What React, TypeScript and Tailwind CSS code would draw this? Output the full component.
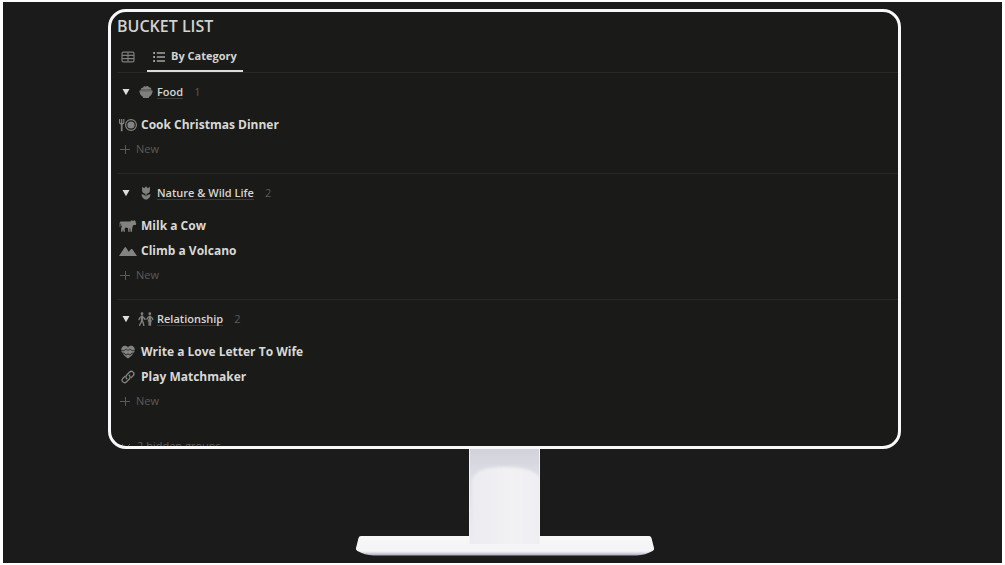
import { useState, type ReactNode } from 'react';

type Item = { title: string; icon: ReactNode };
type Group = { name: string; icon: ReactNode; items: Item[] };

const TableIcon = () => (
  <svg className="w-[14px] h-[14px]" viewBox="0 0 14 14" fill="none" stroke="currentColor" strokeWidth="1.2" aria-hidden="true">
    <rect x="1" y="2.2" width="12" height="9.6" rx="1.4" />
    <path d="M1 5.4h12M1 8.6h12M7 2.2v9.6" />
  </svg>
);

const ListIcon = () => (
  <svg className="w-[12px] h-[12px]" viewBox="0 0 12 12" fill="none" stroke="currentColor" strokeWidth="1.3" aria-hidden="true">
    <path d="M3.8 2H12M3.8 6H12M3.8 10H12" />
    <path d="M0.2 2h1.8M0.2 6h1.8M0.2 10h1.8" strokeWidth="1.8" />
  </svg>
);

const BowlIcon = () => (
  <svg className="w-[14px] h-[14px]" viewBox="0 0 14 14" fill="currentColor" aria-hidden="true">
    <path d="M1.8 4.8C1.5 3.2 2.8 2.4 4 2.7 4.600 1.200 6 1 6.800 1.700 7.600.5 9.600.8 9.800 2.200c1.700-.2 2.800 1 2.500 2.600z" />
    <path d="M0.900 5.200h12.200l.7 1.300H.2z" />
    <path d="M0.500 6.300h13c-.1 2.500-1.400 4.300-3.300 5.400L9.800 13H4.200l-.4-1.300C1.900 10.600.6 8.800.5 6.300z" />
  </svg>
);

const TulipIcon = () => (
  <svg className="w-[14px] h-[14px]" viewBox="0 0 14 14" fill="currentColor" aria-hidden="true">
    <path d="M3.100.8 5.200 2.200 7 .3l1.800 1.900L10.900.8v3.700C10.900 6.500 9.500 7.600 7.600 7.800v2.600c.7-1.500 2-2.300 3.900-2.200-.1 3-1.700 4.800-4.500 5.500-2.800-.7-4.400-2.500-4.500-5.500 1.900-.1 3.200.7 3.900 2.200V7.800C4.500 7.600 3.100 6.500 3.100 4.500z" />
  </svg>
);

const PeopleIcon = () => (
  <svg className="w-[16px] h-[14px]" viewBox="0 0 16 14" fill="none" stroke="currentColor" strokeLinecap="round" strokeLinejoin="round" aria-hidden="true">
    <circle cx="4" cy="1.700" r="1.400" fill="currentColor" stroke="none" />
    <path d="M4 4.400v4" strokeWidth="2.200" />
    <path d="M4 4.400 2 5.500 1 7.600M4 4.400l1.800 1.400L7 7.200M4 8.400l-1 2.200-1.400 2.700M4 8.400l1.200 2.200.6 2.700" strokeWidth="1.400" />
    <circle cx="11.800" cy="1.700" r="1.400" fill="currentColor" stroke="none" />
    <path d="M11.800 4.400v4" strokeWidth="2" />
    <path d="M11.100 9v4.200M12.500 9v4.200" strokeWidth="1.300" />
    <path d="M11.800 4.400 9.900 5.500 8.900 7.200M11.800 4.400l1.900 1.100 1.100 1.900" strokeWidth="1.400" />
    <path d="M11.800 4.500 9.500 9.600h4.600z" fill="currentColor" stroke="none" />
  </svg>
);

const DinnerIcon = () => (
  <svg className="w-[18px] h-[14px]" viewBox="0 0 18 14" fill="none" stroke="currentColor" aria-hidden="true">
    <path d="M0.600 1v3.200c0 1 .9 1.700 2.100 1.700s2.100-.7 2.100-1.700V1M2.700 1v4.500" strokeWidth="1.200" />
    <path d="M2.700 5.500v7.800" strokeWidth="1.700" />
    <circle cx="12" cy="7" r="5.400" strokeWidth="1.200" />
    <circle cx="12" cy="7" r="3.600" fill="currentColor" stroke="none" />
  </svg>
);

const CowIcon = () => (
  <svg className="w-[18px] h-[14px]" viewBox="0 0 18 14" fill="currentColor" aria-hidden="true">
    <path d="M2.400 2.500h8.800l1.200-.7.3-1 .6.9h1.500l.6-.9.300 1.100 1.400.3-.7.900.9 1.700-.6 1.100-2.200.1-1 1.700-.3 2-.2 3.100h-1.500l-.2-3.300-.7.100.1 3.200H9.300L9 9.100 6.800 8.600 5.600 9.800l.4 3H4.600L4 10.200l-.5 2.600H2.100l.1-3.700.6-1.700-.7-1.300V4.300l-.6.5-.1 2.600-.8.5V4.200C.6 3.100 1.400 2.500 2.400 2.500z" />
  </svg>
);

const MountainIcon = () => (
  <svg className="w-[18px] h-[14px]" viewBox="0 0 18 14" fill="currentColor" aria-hidden="true">
    <path d="M0 12 5.600 3.400Q6.300 2.600 7 3.400L9.700 7.700 12.200 5.100Q12.800 4.600 13.400 5.300L18 12z" />
  </svg>
);

const HeartIcon = () => (
  <svg className="w-[14px] h-[14px]" viewBox="0 0 14 14" aria-hidden="true">
    <path
      d="M7 2.400C8.500.5 11.300.3 12.800 2.100c1.400 1.700 1.200 4.200-.1 6C11.300 10.200 9.300 12 7 13.600 4.700 12 2.700 10.200 1.300 8.100 0 6.300-.2 3.800 1.200 2.100 2.700.3 5.500.5 7 2.400z"
      fill="currentColor"
    />
    <path d="M0 5.600h2.900L5.200 4.100 7 5.400 8.800 4.100l2.300 1.500H14" fill="none" stroke="#1a1a18" strokeWidth="0.700" />
    <path d="M1 8.200h2l2 1.900L7 8.800l2 1.300 2-1.900h2" fill="none" stroke="#1a1a18" strokeWidth="0.900" />
  </svg>
);

const LinkIcon = () => (
  <svg className="w-[14px] h-[14px]" viewBox="0 0 14 14" fill="none" stroke="currentColor" strokeWidth="1.3" strokeLinecap="round" aria-hidden="true">
    <path d="M5.800 8.700C4.700 7.500 4.800 6 5.700 5L8.400 2.200c1.100-1.100 2.700-1.100 3.700-.1s1 2.600-.1 3.700L10.200 7.600" />
    <path d="M8.200 5.300C9.300 6.500 9.200 8 8.300 9L5.600 11.800c-1.100 1.100-2.700 1.100-3.700.1s-1-2.600.1-3.700L3.800 6.400" />
  </svg>
);

const groups: Group[] = [
  {
    name: 'Food',
    icon: <BowlIcon />,
    items: [{ title: 'Cook Christmas Dinner', icon: <DinnerIcon /> }],
  },
  {
    name: 'Nature & Wild Life',
    icon: <TulipIcon />,
    items: [
      { title: 'Milk a Cow', icon: <CowIcon /> },
      { title: 'Climb a Volcano', icon: <MountainIcon /> },
    ],
  },
  {
    name: 'Relationship',
    icon: <PeopleIcon />,
    items: [
      { title: 'Write a Love Letter To Wife', icon: <HeartIcon /> },
      { title: 'Play Matchmaker', icon: <LinkIcon /> },
    ],
  },
];

function GroupSection({ group }: { group: Group }) {
  const [open, setOpen] = useState(true);

  return (
    <section className="pb-[11px] border-b border-[#282826] last:border-b-0">
      <div className="flex items-center h-[39px] pb-[1px] text-[11px]">
        <button
          type="button"
          aria-label={`Toggle ${group.name}`}
          aria-expanded={open}
          onClick={() => setOpen(!open)}
          className="flex items-center justify-center w-[18px] h-5 text-[#dededc]"
        >
          <svg className={open ? 'w-[8px] h-[8px]' : 'w-[8px] h-[8px] -rotate-90'} viewBox="0 0 8 8" fill="currentColor">
            <path d="M0.500 1h7L4 7.300z" />
          </svg>
        </button>
        <span className="flex justify-center w-4 ml-[3px] text-[#7f7f7d]">{group.icon}</span>
        <a href="#" className="ml-[3px] leading-[13px] font-semibold text-[#d6d6d4] border-b border-[#3c3c3a]">
          {group.name}
        </a>
        <span className="ml-[11px] text-[#5c5c5a]">{group.items.length}</span>
      </div>
      {open && (
        <ul>
          {group.items.map((item) => (
            <li key={item.title} className="flex items-center h-[25px] pl-[2px]">
              <span className="flex justify-center w-[18px] text-[#838381]">{item.icon}</span>
              <span className="ml-1 text-[12px] font-bold text-[#d8d8d6]">{item.title}</span>
            </li>
          ))}
          <li>
            <button type="button" className="flex items-center gap-[6px] h-[25px] pl-[3px] text-[11px] text-[#5a5a58]">
              <svg className="w-[10px] h-[10px]" viewBox="0 0 10 10" stroke="currentColor" strokeWidth="1" aria-hidden="true">
                <path d="M0 4.500h10M5.500 0v9" />
              </svg>
              New
            </button>
          </li>
        </ul>
      )}
    </section>
  );
}

function Stand() {
  return (
    <svg className="block w-[300px] h-[107px] mx-auto" viewBox="0 0 300 107" aria-hidden="true">
      <defs>
        <linearGradient id="neck" x1="0" y1="0" x2="0" y2="1">
          <stop offset="0" stopColor="#d2d2dc" />
          <stop offset="0.3" stopColor="#dedee6" />
          <stop offset="1" stopColor="#ececf2" />
        </linearGradient>
        <linearGradient id="shine" x1="0" y1="0" x2="1" y2="0">
          <stop offset="0" stopColor="#ebebf1" />
          <stop offset="0.55" stopColor="#f2f2f4" />
          <stop offset="1" stopColor="#efeff3" />
        </linearGradient>
        <linearGradient id="foot" x1="0" y1="0" x2="0" y2="1">
          <stop offset="0" stopColor="#f8f8f9" />
          <stop offset="0.78" stopColor="#f4f4f6" />
          <stop offset="0.86" stopColor="#dcdce6" />
          <stop offset="1" stopColor="#a9a9b8" />
        </linearGradient>
        <filter id="soft" x="-10%" y="-10%" width="120%" height="120%">
          <feGaussianBlur stdDeviation="1.5" />
        </filter>
        <clipPath id="neckClip">
          <path d="M114 0h71v95h-71z" />
        </clipPath>
      </defs>
      <path d="M6 87h288q2 0 2.500 2l2.500 10q.5 2-1.500 3-7 4-16 4.500H18.500Q9.500 106 2.500 102 .5 101 1 99L3.500 89Q4 87 6 87z" fill="url(#foot)" />
      <path d="M114 0h71v95h-71z" fill="url(#neck)" />
      <g clipPath="url(#neckClip)">
        <path d="M117 99V31Q120 18 150 18q29 0 36 12v69z" fill="url(#shine)" filter="url(#soft)" />
      </g>
      <path d="M114.500 0v94M184.500 0v94" stroke="#f3f1f8" />
    </svg>
  );
}

export default function App() {
  const [tab, setTab] = useState('category');

  return (
    <div className="flex min-h-screen px-[3px] py-[2px] bg-white font-['Open_Sans','Noto_Sans',sans-serif]">
      <main className="flex-1 min-w-0 pt-[7px] pl-[105px] pr-[101px] bg-[#1b1b1b]">
        <div className="h-[440px] pl-[6px] overflow-hidden bg-[#1a1a18] border-3 border-[#f8f7fa] rounded-[18px]">
          <h1 className="pt-[3px] text-[16px] leading-[23px] font-semibold text-[#d2d2d0]">BUCKET LIST</h1>
          <div role="tablist" className="flex h-[35px] pt-[5px] border-b border-[#282826]">
            <button
              type="button"
              role="tab"
              aria-label="Table"
              aria-selected={tab === 'table'}
              onClick={() => setTab('table')}
              className="flex items-center px-1 pb-[2px] text-[#7c7c7a]"
            >
              <TableIcon />
            </button>
            <button
              type="button"
              role="tab"
              aria-selected={tab === 'category'}
              onClick={() => setTab('category')}
              className="flex items-center gap-[6px] ml-2 px-[6px] border-b-2 border-[#dcdcda] text-[11px] font-bold text-[#d4d4d2]"
            >
              <span className="text-[#a3a3a1]">
                <ListIcon />
              </span>
              By Category
            </button>
          </div>
          <div>
            {groups.map((group) => (
              <GroupSection key={group.name} group={group} />
            ))}
          </div>
          <button type="button" className="flex items-center gap-[6px] h-8 mt-[5px] pl-1 text-[11px] text-[#5a5a58]">
            <svg className="w-[10px] h-[10px]" viewBox="0 0 10 10" fill="none" stroke="currentColor" aria-hidden="true">
              <path d="M1 3l4 4 4-4" />
            </svg>
            2 hidden groups
          </button>
        </div>
        <Stand />
      </main>
    </div>
  );
}
